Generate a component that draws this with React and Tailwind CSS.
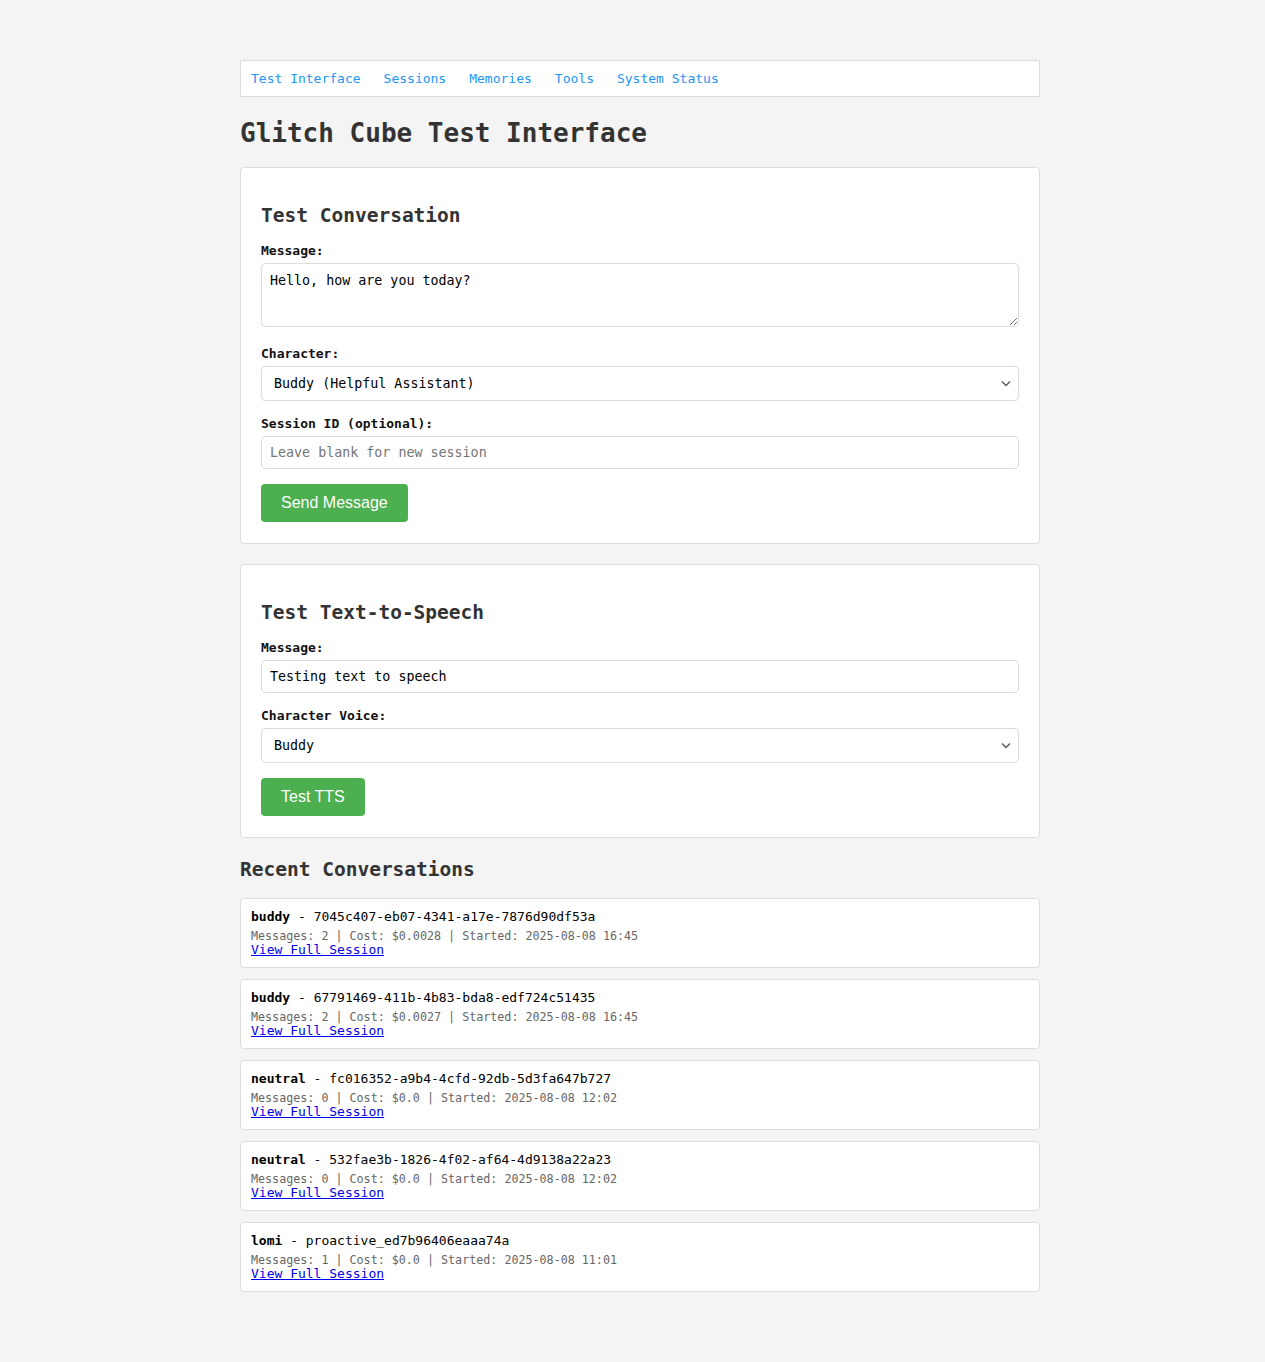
import { useState } from 'react';

const sessions = [
  { character: 'buddy', id: '7045c407-eb07-4341-a17e-7876d90df53a', messages: 2, cost: '0.0028', started: '2025-08-08 16:45' },
  { character: 'buddy', id: '67791469-411b-4b83-bda8-edf724c51435', messages: 2, cost: '0.0027', started: '2025-08-08 16:45' },
  { character: 'neutral', id: 'fc016352-a9b4-4cfd-92db-5d3fa647b727', messages: 0, cost: '0.0', started: '2025-08-08 12:02' },
  { character: 'neutral', id: '532fae3b-1826-4f02-af64-4d9138a22a23', messages: 0, cost: '0.0', started: '2025-08-08 12:02' },
  { character: 'lomi', id: 'proactive_ed7b96406eaaa74a', messages: 1, cost: '0.0', started: '2025-08-08 11:01' },
];

const navLinks = ['Test Interface', 'Sessions', 'Memories', 'Tools', 'System Status'];

function Label({ children }) {
  return <label className="block mb-[5px] font-bold leading-[15px] text-[#111]">{children}</label>;
}

function Select({ value, onChange, options }) {
  return (
    <div className="relative">
      <select
        value={value}
        onChange={e => onChange(e.target.value)}
        className="block w-full h-[35px] appearance-none rounded-[4px] border border-[#ddd] bg-white pl-[12px] pr-[30px] text-[13.33px] text-black outline-none"
      >
        {options.map(o => (
          <option key={o.value} value={o.value}>{o.label}</option>
        ))}
      </select>
      {/* chevron drawn over the native select */}
      <svg className="pointer-events-none absolute right-[8px] top-[14px]" width="10" height="7" viewBox="0 0 10 7" fill="none">
        <path d="M1 1.5 L5 5.5 L9 1.5" stroke="#555" strokeWidth="1.3" />
      </svg>
    </div>
  );
}

function Button({ children }) {
  return (
    <button className="rounded-[4px] bg-[#4caf50] px-[20px] py-[10px] font-['Liberation_Sans',Arial,sans-serif] text-[16px] leading-[18px] text-white hover:bg-[#45a049]">
      {children}
    </button>
  );
}

function Card({ title, className = '', children }) {
  return (
    <div className={`rounded-[4px] border border-[#ddd] bg-white px-[20px] pt-[20px] pb-[21px] ${className}`}>
      <h2 className="mt-[16px] mb-[16px] text-[19.5px] font-bold leading-[23px] text-[#333]">{title}</h2>
      {children}
    </div>
  );
}

export default function App() {
  const [character, setCharacter] = useState('buddy');
  const [voice, setVoice] = useState('buddy');

  return (
    <div className="min-h-screen bg-[#f4f4f4] pl-[15px] font-['DejaVu_Sans_Mono',monospace] text-[13px]">
      <div className="mx-auto w-[800px] pt-[60px] pb-[70px]">
        <nav className="flex gap-[23px] border border-[#ddd] bg-white p-[10px] leading-[15px]">
          {navLinks.map(l => (
            <a key={l} href="#" className="text-[#2196f3]">{l}</a>
          ))}
        </nav>

        <h1 className="mt-[21px] text-[26px] font-bold leading-[30px] text-[#333]">Glitch Cube Test Interface</h1>

        <Card title="Test Conversation" className="mt-[19px]">
          <Label>Message:</Label>
          <textarea
            defaultValue="Hello, how are you today?"
            className="mb-[19px] block h-[64px] w-full rounded-[4px] border border-[#ddd] px-[8px] pt-[9px] pb-[8px] text-[13.33px] leading-[15px] text-black outline-none"
          />
          <Label>Character:</Label>
          <div className="mb-[15px]">
            <Select
              value={character}
              onChange={setCharacter}
              options={[
                { value: 'buddy', label: 'Buddy (Helpful Assistant)' },
                { value: 'lomi', label: 'Lomi' },
                { value: 'neutral', label: 'Neutral' },
              ]}
            />
          </div>
          <Label>Session ID (optional):</Label>
          <input
            type="text"
            placeholder="Leave blank for new session"
            className="mb-[15px] block h-[33px] w-full rounded-[4px] border border-[#ddd] px-[8px] text-[13.33px] text-black outline-none placeholder:text-[#757575]"
          />
          <Button>Send Message</Button>
        </Card>

        <Card title="Test Text-to-Speech" className="mt-[20px]">
          <Label>Message:</Label>
          <input
            type="text"
            defaultValue="Testing text to speech"
            className="mb-[15px] block h-[33px] w-full rounded-[4px] border border-[#ddd] px-[8px] text-[13.33px] text-black outline-none"
          />
          <Label>Character Voice:</Label>
          <div className="mb-[15px]">
            <Select
              value={voice}
              onChange={setVoice}
              options={[
                { value: 'buddy', label: 'Buddy' },
                { value: 'lomi', label: 'Lomi' },
                { value: 'neutral', label: 'Neutral' },
              ]}
            />
          </div>
          <Button>Test TTS</Button>
        </Card>

        <h2 className="mt-[20px] mb-[17px] text-[19.5px] font-bold leading-[23px] text-[#333]">Recent Conversations</h2>

        {sessions.map(s => (
          <div key={s.id} className="mb-[11px] rounded-[4px] border border-[#ddd] bg-white p-[10px]">
            <div className="leading-[16px] text-black">
              <strong>{s.character}</strong> - {s.id}
            </div>
            <div className="mt-[4px] text-[11.7px] leading-[14px] text-[#666]">
              Messages: {s.messages} | Cost: ${s.cost} | Started: {s.started}
            </div>
            <a href="#" className="block w-fit leading-[14px] text-[#0000ee] underline">View Full Session</a>
          </div>
        ))}
      </div>
    </div>
  );
}
